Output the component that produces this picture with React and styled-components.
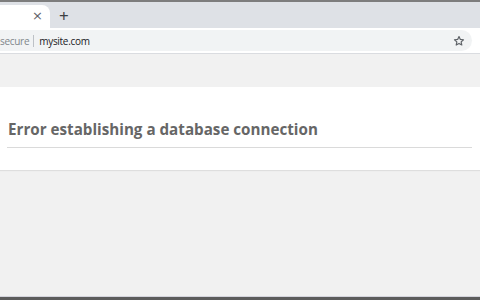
import styled, { createGlobalStyle } from "styled-components";

const GlobalStyle = createGlobalStyle`
  html, body {
    margin: 0;
    padding: 0;
    height: 300px;
    overflow: hidden;
  }
  body {
    font-family: "Noto Sans", "DejaVu Sans", sans-serif;
  }
`

const Window = styled.div`
  display: flex;
  flex-direction: column;
  width: 480px;
  height: 300px;
  background: #f1f1f1;
`

const TopEdge = styled.div`
  height: 2px;
  background: #7d7d7d;
`

const TabStrip = styled.div`
  display: flex;
  align-items: flex-end;
  height: 26px;
  background: #dee1e6;
`

const Tab = styled.div`
  display: flex;
  align-items: center;
  justify-content: flex-end;
  width: 50px;
  height: 23px;
  padding-right: 7px;
  box-sizing: border-box;
  background: #fff;
  border-top-right-radius: 8px;
`

const TabClose = styled.span`
  font-family: "DejaVu Sans", sans-serif;
  font-size: 13px;
  line-height: 1;
  color: #5f6368;
  margin-top: -2px;
`

const NewTab = styled.span`
  align-self: center;
  margin: 1px 0 0 9px;
  font-size: 17px;
  line-height: 1;
  color: #3c4043;
`

const Toolbar = styled.div`
  display: flex;
  align-items: center;
  height: 25px;
  background: #fff;
  border-bottom: 1px solid #dadce0;
`

const Omnibox = styled.div`
  display: flex;
  align-items: center;
  flex: 1;
  height: 21px;
  margin-right: 8px;
  padding-right: 7px;
  background: #f1f3f4;
  border-radius: 0 11px 11px 0;
  font-family: "Open Sans", "Liberation Sans", sans-serif;
  font-size: 10px;
  letter-spacing: -0.3px;
`

const Secure = styled.span`
  color: #80868b;
`

const Divider = styled.span`
  width: 1px;
  height: 12px;
  margin: 0 5px 0 4px;
  background: #bdc1c6;
`

const Url = styled.span`
  flex: 1;
  color: #202124;
`

const Star = styled.svg`
  width: 12px;
  height: 12px;
`

const Page = styled.main`
  flex: 1;
  padding-top: 33px;
`

const Card = styled.section`
  background: #fff;
  padding: 31px 8px 22px 7px;
  box-shadow: 0 1px 1px rgba(0, 0, 0, 0.08);
`

const Heading = styled.h1`
  margin: 0;
  padding-bottom: 6px;
  border-bottom: 1px solid #dadada;
  font-family: "Open Sans", "DejaVu Sans", sans-serif;
  font-size: 15.2px;
  font-weight: 700;
  line-height: 23px;
  color: #666;
  padding-left: 1px;
`

const BottomEdge = styled.div`
  height: 4px;
  background: #5c5c5c;
  border-top: 1px solid #d4d4dc;
  box-sizing: border-box;
`

export default function App() {
  return (
    <>
      <GlobalStyle />
      <Window>
        <TopEdge />
        <TabStrip>
          <Tab>
            <TabClose>×</TabClose>
          </Tab>
          <NewTab>+</NewTab>
        </TabStrip>
        <Toolbar>
          <Omnibox>
            <Secure>secure</Secure>
            <Divider />
            <Url>mysite.com</Url>
            <Star viewBox="0 0 24 24" fill="none" stroke="#5f6368" strokeWidth="2.4" strokeLinejoin="round">
              <path d="M12 3l2.7 5.8 6.3.7-4.7 4.3 1.3 6.2L12 16.9 6.4 20l1.3-6.2L3 9.5l6.3-.7z" />
            </Star>
          </Omnibox>
        </Toolbar>
        <Page>
          <Card>
            <Heading>Error establishing a database connection</Heading>
          </Card>
        </Page>
        <BottomEdge />
      </Window>
    </>
  );
}
